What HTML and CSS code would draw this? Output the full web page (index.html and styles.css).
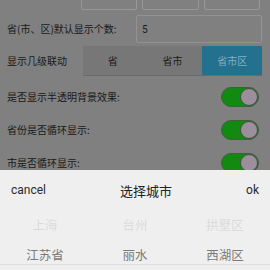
FILE: index.html
```html
<!DOCTYPE html>
<html>
<head>
<meta charset="utf-8">
<link rel="stylesheet" href="styles.css">
</head>
<body>
<div class="page">
  <div class="row row-top">
    <span class="label"></span>
    <div class="boxes">
      <div class="box"></div>
      <div class="box"></div>
      <div class="box"></div>
    </div>
  </div>
  <div class="row row-input">
    <span class="label">省(市、区)默认显示个数:</span>
    <div class="input">5</div>
  </div>
  <div class="row row-seg">
    <span class="label">显示几级联动</span>
    <div class="seg">
      <div class="seg-item">省</div>
      <div class="seg-item">省市</div>
      <div class="seg-item active">省市区</div>
    </div>
  </div>
  <div class="row row-switch">
    <span class="label">是否显示半透明背景效果:</span>
    <div class="switch"><span class="knob"></span></div>
  </div>
  <div class="row row-switch">
    <span class="label">省份是否循环显示:</span>
    <div class="switch"><span class="knob"></span></div>
  </div>
  <div class="row row-switch">
    <span class="label">市是否循环显示:</span>
    <div class="switch"><span class="knob"></span></div>
  </div>
</div>
<div class="picker">
  <div class="picker-head">
    <span class="btn">cancel</span>
    <span class="title">选择城市</span>
    <span class="btn">ok</span>
  </div>
  <div class="columns">
    <div class="col">
      <div class="item faded">上海</div>
      <div class="item">江苏省</div>
    </div>
    <div class="col">
      <div class="item faded">台州</div>
      <div class="item">丽水</div>
    </div>
    <div class="col">
      <div class="item faded">拱墅区</div>
      <div class="item">西湖区</div>
    </div>
  </div>
  <div class="indicator"></div>
</div>
</body>
</html>
```

FILE: styles.css
```css
html, body {
  margin: 0;
  padding: 0;
  width: 270px;
  height: 270px;
  overflow: hidden;
  background: #808080;
  font-family: "Noto Sans CJK SC", "Noto Sans", sans-serif;
}
.page {
  display: flex;
  flex-direction: column;
  margin-top: -18px;
  padding: 0 8px 0 7px;
}
.row {
  display: flex;
  align-items: center;
  justify-content: space-between;
}
.label {
  font-size: 10px;
  color: #181818;
  line-height: 14px;
  white-space: nowrap;
}
.row-top { height: 28px; }
.boxes {
  display: flex;
  gap: 5px;
  margin-right: 2px;
}
.box {
  width: 54px;
  height: 26px;
  border: 1px solid #979797;
  border-radius: 2px;
}
.box:nth-child(2) { width: 55px; }
.row-input {
  height: 28px;
  margin-top: 5px;
}
.input {
  box-sizing: border-box;
  width: 126px;
  height: 28px;
  border: 1px solid #929292;
  border-radius: 2px;
  font-family: "Roboto", sans-serif;
  font-size: 10px;
  color: #1c1c1c;
  display: flex;
  align-items: center;
  padding-left: 5px;
}
.row-seg {
  height: 30px;
  margin-top: 3px;
}
.seg {
  display: flex;
  width: 179px;
  height: 30px;
  background: #777;
  border-bottom: 1px solid #6a6a6a;
  box-sizing: border-box;
}
.seg-item {
  flex: 1;
  display: flex;
  align-items: center;
  justify-content: center;
  font-size: 10px;
  color: #1a1a1a;
}
.seg-item.active {
  background: #24708f;
  color: #80b0c2;
}
.row-switch {
  height: 33px;
}
.row-seg + .row-switch { margin-top: 4px; }
.switch {
  box-sizing: border-box;
  width: 38px;
  height: 20px;
  border-radius: 10px;
  background: #128a12;
  border: 1px solid #3f5f3f;
  margin-right: 3px;
  display: flex;
  justify-content: flex-end;
  align-items: center;
}
.knob {
  box-sizing: border-box;
  width: 18px;
  height: 18px;
  border-radius: 50%;
  background: #9a8f9a;
  border: 1px solid #4a4a4a;
}
.picker {
  position: fixed;
  left: 0;
  bottom: 0;
  width: 270px;
  height: 100px;
  background: #efefef;
}
.picker-head {
  height: 40px;
  display: flex;
  align-items: center;
  justify-content: space-between;
  padding: 0 11px 0 11px;
}
.btn {
  font-family: "Roboto", "Liberation Sans", sans-serif;
  font-size: 12px;
  color: #2a2a2a;
}
.title {
  font-size: 13px;
  color: #222;
}
.columns {
  display: flex;
}
.col {
  flex: 1;
  display: flex;
  flex-direction: column;
  align-items: center;
}
.item {
  height: 30px;
  line-height: 30px;
  font-size: 12.5px;
  color: #7a7a7a;
}
.item.faded {
  color: #dadada;
  filter: blur(0.4px);
}
.indicator {
  position: absolute;
  left: 0;
  right: 0;
  top: 94px;
  height: 1px;
  background: #dedede;
}
```
